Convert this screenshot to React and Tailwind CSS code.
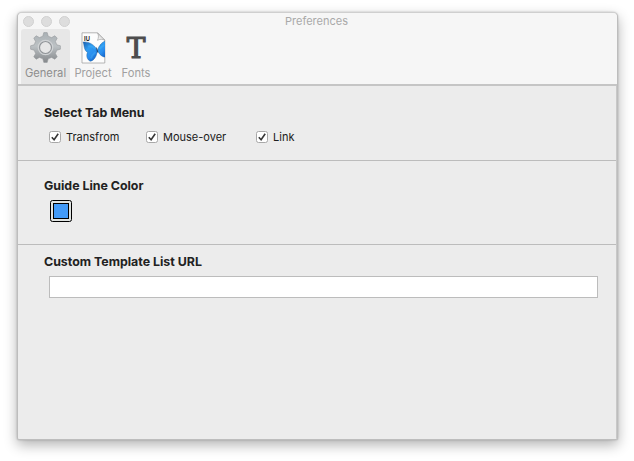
import React from 'react';

const GEAR_POINTS = Array.from({ length: 8 }, (_, i) =>
  [[-13.5, 11.6], [-6.5, 15], [6.5, 15], [13.5, 11.6]].map(([d, r]) => {
    const a = ((i * 45 + d) * Math.PI) / 180;
    return `${(15.5 + r * Math.sin(a)).toFixed(2)},${(15.5 - r * Math.cos(a)).toFixed(2)}`;
  }).join(' ')
).join(' ');

function GearIcon() {
  return (
    <svg width="31" height="31" viewBox="0 0 31 31">
      <defs>
        <linearGradient id="gear" x1="0" y1="0" x2="0" y2="1">
          <stop offset="0" stopColor="#a9b0b4" />
          <stop offset="0.45" stopColor="#bcc1c4" />
          <stop offset="1" stopColor="#85888b" />
        </linearGradient>
      </defs>
      <polygon points={GEAR_POINTS} fill="url(#gear)" stroke="#979b9e" strokeWidth="0.6" strokeLinejoin="round" />
      <circle cx="15.5" cy="15.5" r="7.2" fill="#e7e7e7" stroke="#d0d3d5" strokeWidth="1.2" />
      <circle cx="15.5" cy="15.5" r="6" fill="#e7e7e7" stroke="#92969a" strokeWidth="1.2" />
    </svg>
  );
}

function ProjectIcon() {
  return (
    <svg width="25" height="32" viewBox="0 0 25 32">
      <defs>
        <linearGradient id="wing" x1="0" y1="0" x2="0.7" y2="1">
          <stop offset="0" stopColor="#1a5fae" />
          <stop offset="0.4" stopColor="#2f9cf0" />
          <stop offset="0.7" stopColor="#2a8ff0" />
          <stop offset="1" stopColor="#176bd0" />
        </linearGradient>
        <linearGradient id="fold" x1="0" y1="1" x2="1" y2="0">
          <stop offset="0" stopColor="#ffffff" />
          <stop offset="0.5" stopColor="#dedede" />
          <stop offset="1" stopColor="#b5b5b5" />
        </linearGradient>
        <clipPath id="page"><path d="M1 1H17L24 8V31H1Z" /></clipPath>
      </defs>
      <path d="M1 .8H16.5L23.8 8.3V31H1Z" fill="#fdfdfd" stroke="#a3a3a3" strokeWidth="0.8" />
      <path d="M16.5 1C18 3.5 17.5 6 16.5 8.3C19 7 21.5 7 24 8.3Z" fill="url(#fold)" stroke="#999" strokeWidth="0.6" />
      <text x="3.1" y="8.9" fontSize="7" fill="#222" fontWeight="700" textLength="5.8" lengthAdjust="spacingAndGlyphs" className="font-['Liberation_Sans']">IU</text>
      <g clipPath="url(#page)">
        <path d="M16.3 18.2C13.5 12.5 7.5 9.3 2.1 10C3.2 13 2.8 15.8 4.3 18.3C5 19.4 5.6 19.8 6.5 20.3C4.8 23.8 6.2 28 9.2 29.2C13 29 16 24 16.3 18.2Z" fill="url(#wing)" stroke="#1b5da0" strokeWidth="0.4" />
        <path d="M16.5 18.2C18 13.3 21 10 25 8.6V25C21.7 25.6 18.2 22.6 16.5 18.2Z" fill="url(#wing)" stroke="#1b5da0" strokeWidth="0.4" />
        <path d="M14.5 17C12.5 15 9.5 14 7 14.5M14.6 20C12.5 21.7 10.5 24 10 26.5M18.6 16.8L23 13" stroke="#45b4f8" strokeOpacity="0.4" strokeWidth="2" fill="none" />
        <path d="M15.5 15.6L16.8 20.6" stroke="#183e69" strokeWidth="0.9" />
      </g>
    </svg>
  );
}

function CheckBox({ label, className }) {
  return (
    <label className={`flex items-center ${className}`}>
      <span className="flex size-3 items-center justify-center rounded-[2.5px] border border-[#a8a8a8] bg-white">
        <svg width="10" height="10" viewBox="0 0 10 10">
          <path d="M1.8 5.2L4.1 7.7L8.2 1.8" fill="none" stroke="#353535" strokeWidth="1.6" />
        </svg>
      </span>
      <span className="ml-[5px] text-[11px]">{label}</span>
    </label>
  );
}

function Heading({ children }) {
  return <h2 className="text-[12.4px] leading-4 font-bold tracking-[-0.01px] text-[#222]">{children}</h2>;
}

export default function App() {
  return (
    <div className="h-[461px] w-[634px] overflow-hidden bg-white pt-[12px] pl-[17px] font-['Inter',sans-serif] whitespace-nowrap">
      <div className="flex h-[428px] w-[601px] flex-col overflow-hidden rounded-t-[5px] rounded-b-[2px] border border-[#bdbdbd] border-t-[#cfcfcf] bg-[#ececec] shadow-[0_5px_13px_rgba(0,0,0,0.3),0_0_2px_rgba(0,0,0,0.25)]">
        <header className="h-[73px] shrink-0 border-b-2 border-[#c5c5c5] bg-[#f6f6f6]">
          <div className="relative flex h-4 items-center gap-[7px] pl-[5px]">
            <span className="size-[11px] rounded-full border border-[#d0d0d0] bg-[#dddddd]" />
            <span className="size-[11px] rounded-full border border-[#d0d0d0] bg-[#dddddd]" />
            <span className="size-[11px] rounded-full border border-[#d0d0d0] bg-[#dddddd]" />
            <span className="absolute inset-x-0 pr-[2px] text-center text-[11px] leading-4 text-[#a9a9a9]">Preferences</span>
          </div>
          <nav className="flex h-[55px] pl-[3px] text-[11.2px] leading-4 text-[#a0a0a0]">
            <div className="flex w-[49px] flex-col items-center rounded-t-[3px] bg-[#e7e7e7] pt-[3px] text-[#8e8e8e]">
              <GearIcon />
              <span className="mt-[2px]">General</span>
            </div>
            <div className="flex w-[46px] flex-col items-center pt-[3px]">
              <ProjectIcon />
              <span className="mt-px">Project</span>
            </div>
            <div className="flex w-[40px] flex-col items-center pt-[3px]">
              <span className="h-[33px] font-['DejaVu_Serif',serif] text-[28px] leading-[34px] text-[#4d4d4d] [-webkit-text-stroke:1.2px_#4d4d4d]">T</span>
              <span>Fonts</span>
            </div>
          </nav>
        </header>
        <main className="flex-1 border-r border-[#c8c8c8]">
          <section className="h-[75px] border-b border-[#bcbcbc] pt-[19px] pl-[26px]">
            <Heading>Select Tab Menu</Heading>
            <div className="mt-2 flex h-4 pl-[5px] text-[#202020]">
              <CheckBox label="Transfrom" className="w-[97px]" />
              <CheckBox label="Mouse-over" className="w-[110px]" />
              <CheckBox label="Link" className="" />
            </div>
          </section>
          <section className="h-[84px] border-b border-[#bcbcbc] pt-[17px] pl-[26px]">
            <Heading>Guide Line Color</Heading>
            <div className="mt-[6px] ml-[6px] flex size-[22px] items-center justify-center rounded-[2.5px] border border-black bg-[#dfe3e1]">
              <div className="size-4 border border-black bg-[#429bf9]" />
            </div>
          </section>
          <section className="pt-[9px] pl-[26px]">
            <Heading>Custom Template List URL</Heading>
            <input className="mt-[6px] ml-[5px] block h-[22px] w-[549px] border border-[#bcbcbc] bg-white outline-none" />
          </section>
        </main>
      </div>
    </div>
  );
}
